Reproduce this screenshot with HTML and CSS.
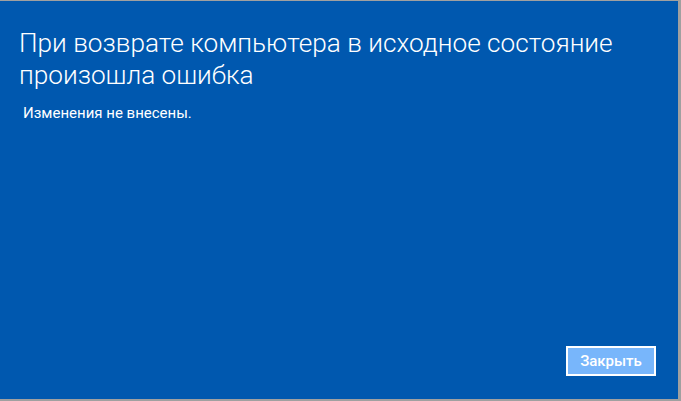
FILE: index.html
```html
<!DOCTYPE html>
<html lang="ru">
<head>
<meta charset="utf-8">
<link rel="stylesheet" href="styles.css">
</head>
<body>
<div class="frame">
  <div class="dialog">
    <div class="content">
      <h1 class="title">При возврате компьютера в исходное состояние произошла ошибка</h1>
      <p class="message">Изменения не внесены.</p>
    </div>
    <div class="footer">
      <button class="btn">Закрыть</button>
    </div>
  </div>
</div>
</body>
</html>
```

FILE: styles.css
```css
html, body {
  margin: 0;
  padding: 0;
  width: 681px;
  height: 401px;
  overflow: hidden;
  background: #a0a0a0;
}
.frame {
  box-sizing: border-box;
  width: 681px;
  height: 401px;
  border-top: 1px solid #a0a0a0;
  border-right: 3px solid #a0a0a0;
  border-bottom: 2px solid #a0a0a0;
}
.dialog {
  box-sizing: border-box;
  height: 100%;
  background: #0058af;
  display: flex;
  flex-direction: column;
  justify-content: space-between;
  padding: 26px 22px 23px 19px;
  color: #fff;
  font-family: Roboto, "Open Sans", sans-serif;
}
.title {
  margin: 0;
  font-weight: 300;
  font-size: 26.2px;
  line-height: 32px;
  width: 635px;
}
.message {
  margin: 12px 0 0 4px;
  font-size: 15px;
  line-height: 20px;
}
.footer {
  display: flex;
  justify-content: flex-end;
}
.btn {
  box-sizing: border-box;
  width: 90px;
  height: 30px;
  border: 2px solid #fff;
  background: #78b6fb;
  color: #fff;
  font-family: Roboto, "Open Sans", sans-serif;
  font-weight: 500;
  font-size: 15px;
  padding: 0;
}
```
